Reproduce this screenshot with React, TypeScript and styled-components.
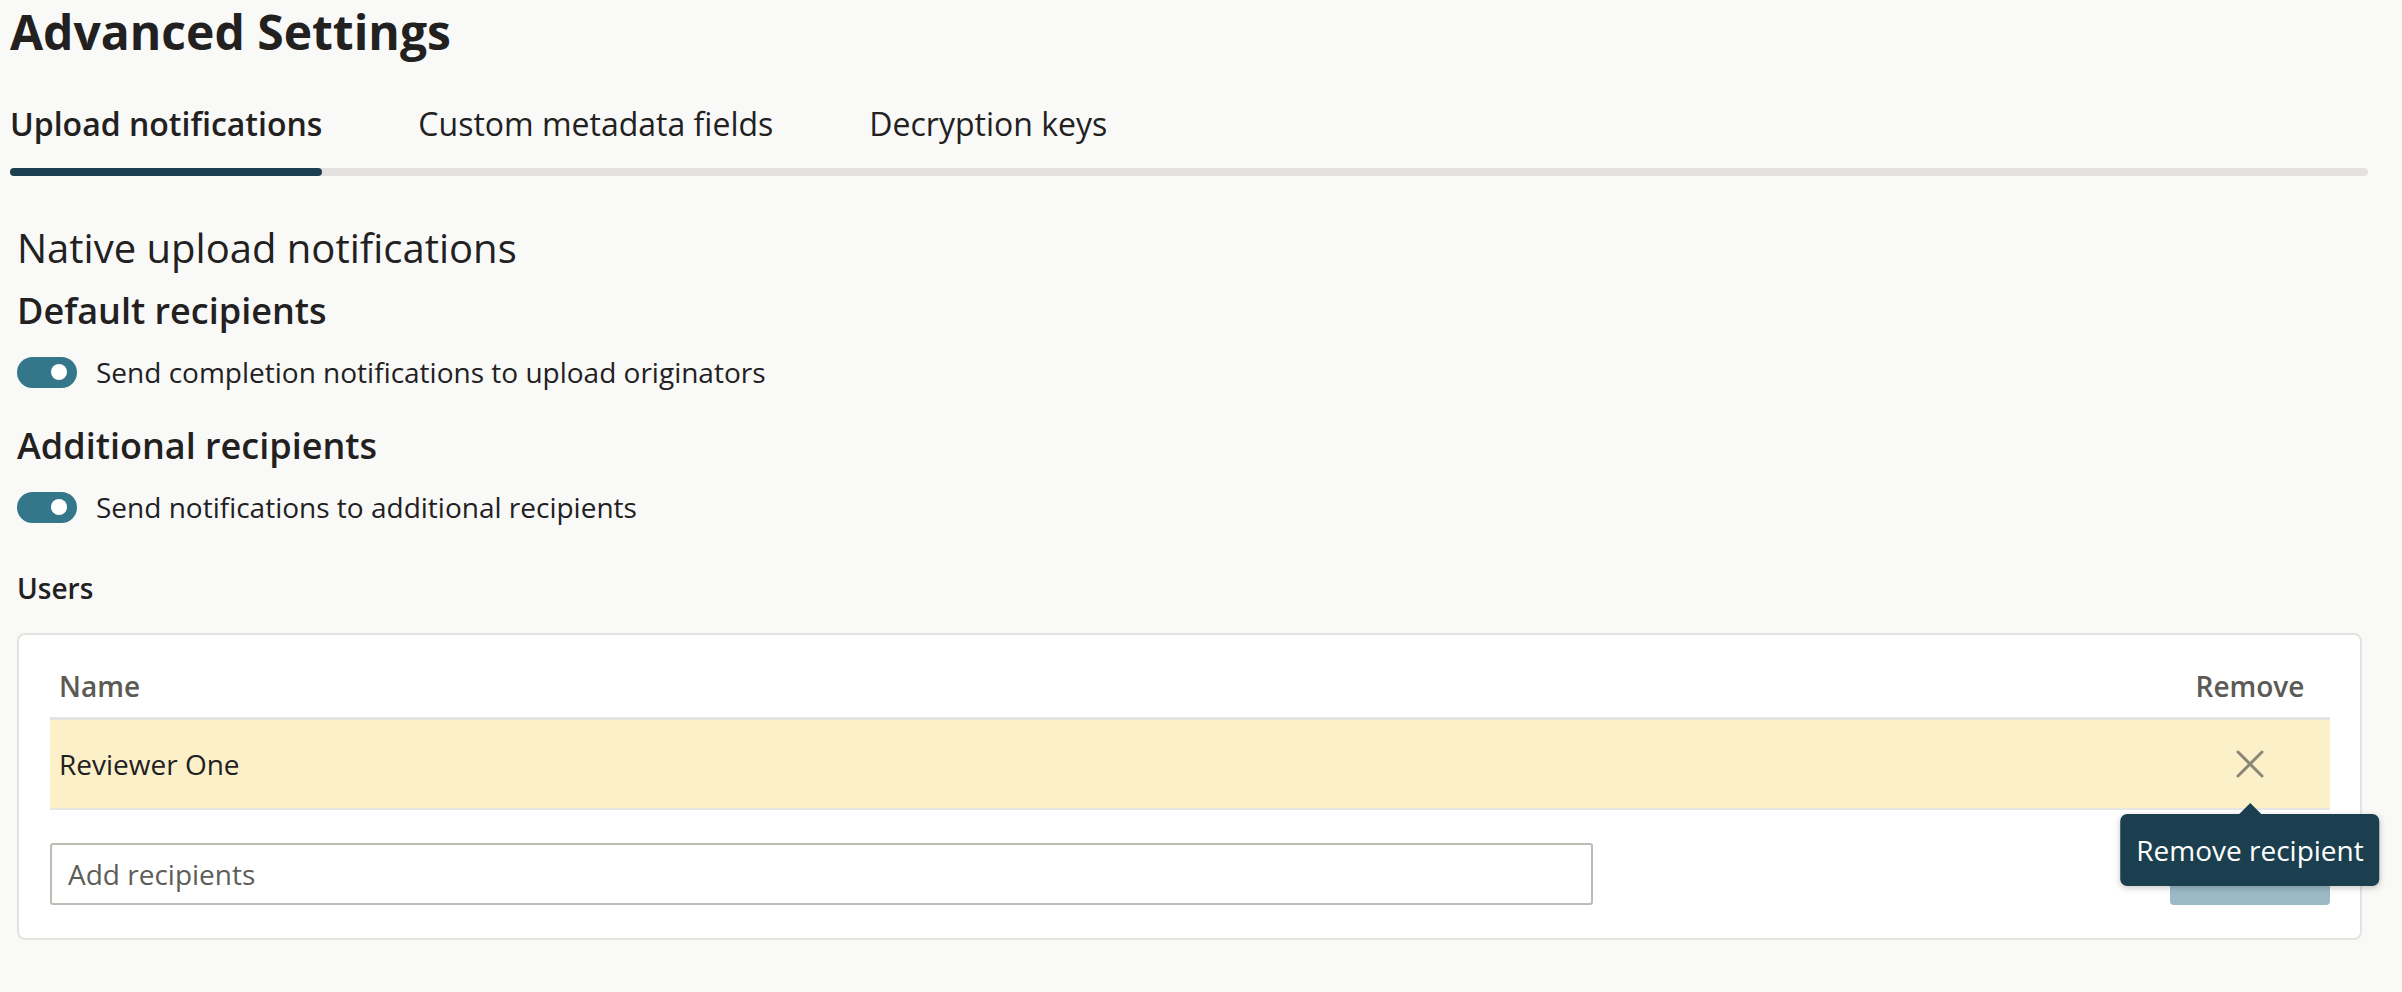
import { memo } from 'react';
import type { FC } from 'react';
import styled, { createGlobalStyle } from 'styled-components';

const GlobalStyle = createGlobalStyle`
  html, body {
    margin: 0;
    padding: 0;
    background: #f9f9f7;
  }
  body {
    font-family: 'Open Sans', 'Noto Sans', sans-serif;
    color: #22211f;
  }
  * {
    box-sizing: border-box;
  }
`;

const Page = styled.div`
  padding: 2px 34px 0 10px;
  height: 992px;
  overflow: hidden;
`;

const Title = styled.h1`
  margin: 0;
  font-size: 48px;
  line-height: 60px;
  font-weight: 700;
`;

const TabList = styled.div`
  position: relative;
  display: flex;
  gap: 96px;
  margin-top: 42px;

  &::before {
    content: '';
    position: absolute;
    left: 0;
    right: 0;
    bottom: 0;
    height: 8px;
    border-radius: 4px;
    background: #e3e2de;
  }
`;

const Tab = styled.div<{ $active?: boolean }>`
  position: relative;
  padding-bottom: 32px;
  font-size: 32px;
  line-height: 40px;
  font-weight: ${(p) => (p.$active ? 600 : 400)};
  color: #22211f;
  cursor: pointer;

  &::after {
    content: '';
    position: absolute;
    left: 0;
    right: 0;
    bottom: 0;
    height: 8px;
    border-radius: 4px;
    background: ${(p) => (p.$active ? '#1b3f4e' : 'transparent')};
  }
`;

const Panel = styled.div`
  padding: 0 6px 0 7px;
`;

const SectionTitle = styled.h2`
  margin: 46px 0 0;
  font-size: 40px;
  line-height: 52px;
  font-weight: 400;
`;

const SubHeading = styled.h3<{ $gap: number }>`
  margin: ${(p) => p.$gap}px 0 0;
  font-size: 36px;
  line-height: 46px;
  font-weight: 600;
`;

const ToggleRow = styled.label<{ $gap: number }>`
  display: flex;
  align-items: center;
  gap: 19px;
  margin-top: ${(p) => p.$gap}px;
  font-size: 28px;
  line-height: 40px;
`;

const Switch = styled.span`
  position: relative;
  flex: none;
  width: 60px;
  height: 31px;
  border-radius: 16px;
  background: #34768a;

  &::after {
    content: '';
    position: absolute;
    top: 7.5px;
    right: 10px;
    width: 16px;
    height: 16px;
    border-radius: 50%;
    background: #fff;
  }
`;

const FieldLabel = styled.div`
  margin-top: 41px;
  font-size: 28px;
  line-height: 40px;
  font-weight: 600;
`;

const Card = styled.div`
  margin-top: 25px;
  padding: 31px 30px 33px 31px;
  background: #fff;
  border: 2px solid #e4e3df;
  border-radius: 8px;
`;

const Table = styled.table`
  width: 100%;
  border-collapse: separate;
  border-spacing: 0;
  font-size: 28px;
  line-height: 40px;
`;

const HeadCell = styled.th<{ $center?: boolean }>`
  padding: 0 ${(p) => (p.$center ? 0 : 9)}px 11px;
  width: ${(p) => (p.$center ? '160px' : 'auto')};
  text-align: ${(p) => (p.$center ? 'center' : 'left')};
  font-weight: 600;
  color: #5b5a54;
  border-bottom: 3px solid #e4e3df;
`;

const BodyRow = styled.tr`
  background: #fcf0c9;
`;

const BodyCell = styled.td<{ $center?: boolean }>`
  position: relative;
  height: 90px;
  padding: 0 ${(p) => (p.$center ? 0 : 9)}px;
  text-align: ${(p) => (p.$center ? 'center' : 'left')};
  border-bottom: 2px solid #e8e6e1;
  vertical-align: middle;
`;

const IconButton = styled.button`
  display: flex;
  align-items: center;
  justify-content: center;
  width: 40px;
  height: 40px;
  margin: 0 auto;
  padding: 0;
  border: none;
  background: none;
  color: #8a8779;
  cursor: pointer;
`;

const Tooltip = styled.div`
  position: absolute;
  top: 94px;
  left: 50%;
  transform: translateX(-50%);
  z-index: 2;
  padding: 16px;
  white-space: nowrap;
  background: #1b3f4e;
  color: #fff;
  font-size: 28px;
  line-height: 40px;
  border-radius: 7px;
  box-shadow: 0 2px 6px rgba(0, 0, 0, 0.22);

  &::before {
    content: '';
    position: absolute;
    top: -11px;
    left: 50%;
    transform: translateX(-50%);
    border-left: 11px solid transparent;
    border-right: 11px solid transparent;
    border-bottom: 11px solid #1b3f4e;
  }
`;

const AddRow = styled.div`
  display: flex;
  align-items: center;
  margin-top: 33px;
`;

const RecipientInput = styled.input`
  width: 1543px;
  height: 62px;
  padding: 0 16px;
  font-family: inherit;
  font-size: 28px;
  color: #22211f;
  background: #fff;
  border: 2px solid #bdbcb4;
  border-radius: 3px;
  outline: none;

  &::placeholder {
    color: #5e5d57;
  }
`;

const AddButton = styled.button`
  margin-left: auto;
  width: 160px;
  height: 62px;
  border: none;
  border-radius: 4px;
  background: #9bbac6;
`;

const NextSection = styled(SectionTitle)`
  margin-top: 42px;
`;

const CloseIcon: FC = () => (
  <svg width="28" height="28" viewBox="0 0 28 28" fill="none">
    <path d="M2 2L26 26M26 2L2 26" stroke="currentColor" strokeWidth="3" strokeLinecap="round" />
  </svg>
);

const recipients = ['Reviewer One'];

const App: FC = memo(() => {
  return (
    <Page>
      <GlobalStyle />
      <Title>Advanced Settings</Title>
      <TabList>
        <Tab $active>Upload notifications</Tab>
        <Tab>Custom metadata fields</Tab>
        <Tab>Decryption keys</Tab>
      </TabList>
      <Panel>
        <SectionTitle>Native upload notifications</SectionTitle>
        <SubHeading $gap={14}>Default recipients</SubHeading>
        <ToggleRow $gap={18}>
          <Switch />
          Send completion notifications to upload originators
        </ToggleRow>
        <SubHeading $gap={31}>Additional recipients</SubHeading>
        <ToggleRow $gap={18}>
          <Switch />
          Send notifications to additional recipients
        </ToggleRow>
        <FieldLabel>Users</FieldLabel>
        <Card>
          <Table>
            <thead>
              <tr>
                <HeadCell>Name</HeadCell>
                <HeadCell $center>Remove</HeadCell>
              </tr>
            </thead>
            <tbody>
              {recipients.map((name) => (
                <BodyRow key={name}>
                  <BodyCell>{name}</BodyCell>
                  <BodyCell $center>
                    <IconButton aria-label="Remove recipient">
                      <CloseIcon />
                    </IconButton>
                    <Tooltip>Remove recipient</Tooltip>
                  </BodyCell>
                </BodyRow>
              ))}
            </tbody>
          </Table>
          <AddRow>
            <RecipientInput placeholder="Add recipients" />
            <AddButton disabled aria-label="Add" />
          </AddRow>
        </Card>
        <NextSection>Scheduled notifications</NextSection>
      </Panel>
    </Page>
  );
});

export default App;
